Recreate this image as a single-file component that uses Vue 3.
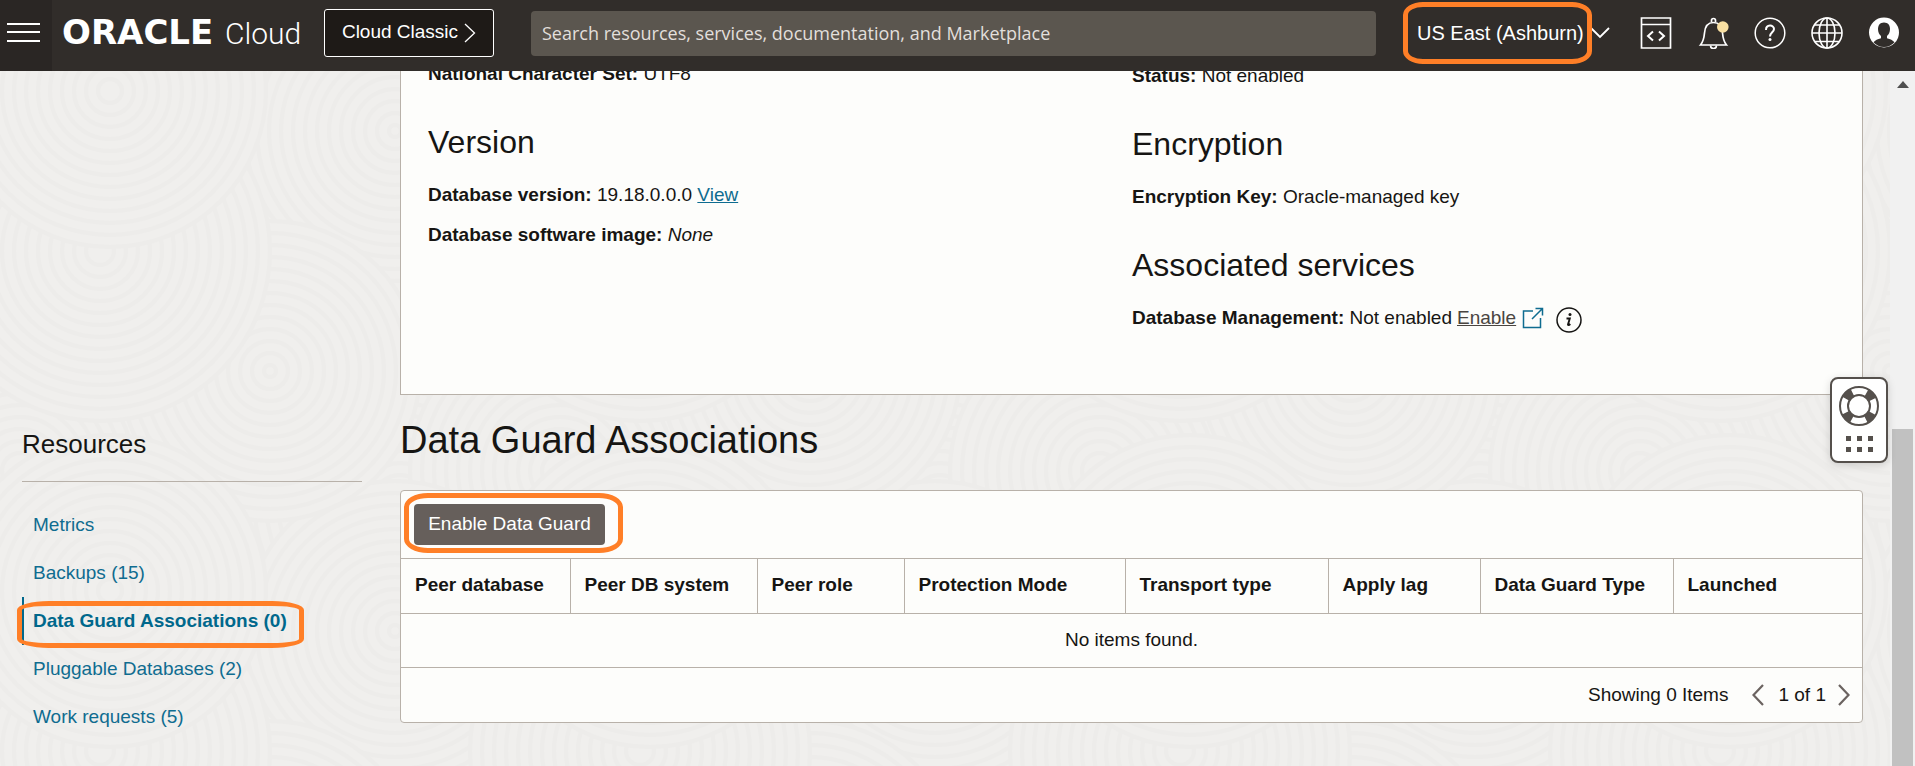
<script setup>
import { ref } from 'vue'

const query = ref('')
const region = ref('US East (Ashburn)')

const tile = { w: 540, h: 500 }
const discs = [
  { x: 400, y: 430, r: 170 },
  { x: 20, y: 400, r: 150 },
  { x: 395, y: 60, r: 150 },
  { x: 270, y: 300, r: 150 },
  { x: 100, y: 180, r: 170 },
  { x: 110, y: 20, r: 156 },
]
const rings = discs.flatMap((d) => {
  const radii = []
  for (let r = d.r; r > 4; r -= 12) radii.push(r)
  return [-1, 0, 1].flatMap((i) =>
    [-1, 0, 1].map((j) => ({ x: d.x + i * tile.w, y: d.y + j * tile.h, radii }))
  )
})

const resources = [
  { label: 'Metrics' },
  { label: 'Backups (15)' },
  { label: 'Data Guard Associations (0)', active: true },
  { label: 'Pluggable Databases (2)' },
  { label: 'Work requests (5)' },
]

const columns = [
  { label: 'Peer database', cls: 'c-database' },
  { label: 'Peer DB system', cls: 'c-system' },
  { label: 'Peer role', cls: 'c-role' },
  { label: 'Protection Mode', cls: 'c-mode' },
  { label: 'Transport type', cls: 'c-transport' },
  { label: 'Apply lag', cls: 'c-lag' },
  { label: 'Data Guard Type', cls: 'c-type' },
  { label: 'Launched', cls: 'c-launched' },
]
</script>

<template>
  <div class="page">
    <header class="topbar">
      <button class="menu" aria-label="Open navigation menu">
        <svg width="34" height="20" viewBox="0 0 34 20"><path d="M0 1h33M0 9h33M0 18h33" stroke="#fff" stroke-width="2" /></svg>
      </button>
      <a class="brand" href="#"><span class="brand-name">ORACLE</span><span class="brand-product">Cloud</span></a>
      <button class="classic">
        <span>Cloud Classic</span>
        <svg width="12" height="20" viewBox="0 0 12 20"><path d="M1 1l9.5 9L1 19" fill="none" stroke="#fff" stroke-width="1.3" /></svg>
      </button>
      <input v-model="query" class="search" type="text" aria-label="Search" placeholder="Search resources, services, documentation, and Marketplace" />
      <label class="region">
        <select v-model="region" aria-label="Region"><option>US East (Ashburn)</option></select>
        <svg width="20" height="12" viewBox="0 0 20 12"><path d="M1 1l9 9 9-9" fill="none" stroke="#fff" stroke-width="1.8" /></svg>
        <span class="mark mark-region"></span>
      </label>
      <div class="tools">
        <button aria-label="Developer tools">
          <svg width="32" height="32" viewBox="0 0 32 32" fill="none" stroke="#fff" stroke-width="1.7"><path d="M1.5 1h29v30h-29zM1.5 7.5h29" /><path d="M13 14.5l-5 4.5 5 4.5M19 14.5l5 4.5-5 4.5" stroke-width="2" /></svg>
        </button>
        <button aria-label="Announcements">
          <svg width="32" height="32" viewBox="0 0 32 32" fill="none" stroke="#fff" stroke-width="1.7"><path d="M3.500 28h26c-2.500-3-3.500-6.500-4-12-.5-6.500-3.500-10.500-9-10.500S8 9.500 7.500 16c-.5 5.500-1.500 9-4 12z" /><path d="M14.500 5V3.500a2 2 0 0 1 4 0V5M13.500 28.500a3 3 0 0 0 6 0" /><circle cx="25.800" cy="10" r="5.800" fill="#f9e0a2" stroke="none" /></svg>
        </button>
        <button aria-label="Help">
          <svg width="32" height="32" viewBox="0 0 32 32" fill="none" stroke="#fff" stroke-width="1.5"><circle cx="16" cy="16" r="14.8" /><path d="M12 13c0-6 8-5.500 8-1 0 3.200-4 3.500-4 7.500" stroke-width="2" /><circle cx="16" cy="22.500" r="1.500" fill="#fff" stroke="none" /></svg>
        </button>
        <button aria-label="Language">
          <svg width="32" height="32" viewBox="0 0 32 32" fill="none" stroke="#fff" stroke-width="1.6"><circle cx="16" cy="16" r="15" /><ellipse cx="16" cy="16" rx="8" ry="15" /><path d="M16 1v30M1 16h30M3.500 8h25M3.500 24.500h25" /></svg>
        </button>
        <button aria-label="Profile">
          <svg width="32" height="32" viewBox="0 0 32 32"><circle cx="16" cy="15.500" r="15" fill="#fff" /><path d="M16 5.500c4 0 6 2.800 6 6.500 0 3.200-1.300 5.600-3 7v2.200c3.400.8 5.800 2 7.500 4A14.500 14.500 0 0 1 16 30a14.500 14.500 0 0 1-10.500-4.800c1.700-2 4.100-3.200 7.500-4V19c-1.700-1.400-3-3.800-3-7 0-3.700 2-6.500 6-6.500z" fill="#312d2a" /></svg>
        </button>
      </div>
    </header>

    <div class="body">
      <main class="content">
        <svg class="texture" width="100%" height="100%" aria-hidden="true">
          <defs>
            <pattern id="waves" :width="tile.w" :height="tile.h" patternUnits="userSpaceOnUse">
              <rect :width="tile.w" :height="tile.h" fill="#f0efed" />
              <g v-for="(d, i) in rings" :key="i" stroke="#edecea" stroke-width="4" fill="#f0efed">
                <circle v-for="r in d.radii" :key="r" :cx="d.x" :cy="d.y" :r="r" />
              </g>
            </pattern>
          </defs>
          <rect width="100%" height="100%" fill="url(#waves)" />
        </svg>

        <section class="details">
          <div class="details-col">
            <p><b>National Character Set:</b> UTF8</p>
            <h2>Version</h2>
            <p><b>Database version:</b> 19.18.0.0.0 <a href="#">View</a></p>
            <p><b>Database software image:</b> <i>None</i></p>
          </div>
          <div class="details-col second">
            <p><b>Status:</b> Not enabled</p>
            <h2>Encryption</h2>
            <p><b>Encryption Key:</b> Oracle-managed key</p>
            <h2>Associated services</h2>
            <p class="management">
              <span><b>Database Management:</b> Not enabled</span>
              <a class="enable" href="#">Enable</a>
              <svg class="external" width="22" height="22" viewBox="0 0 22 22" fill="none" stroke="#0f6c90" stroke-width="1.5"><path d="M11 4H1.500v16.500h17V11M10 12L20.500 1.500M13.500 1.500h7v7" /></svg>
              <svg class="info" width="26" height="26" viewBox="0 0 26 26"><circle cx="13" cy="13" r="12" fill="none" stroke="#161513" stroke-width="1.5" /><circle cx="14" cy="7.500" r="1.500" fill="#161513" /><path d="M10.500 11.500h3.300l-1.800 6c-.2.900.8.900 2.300-.5" fill="none" stroke="#161513" stroke-width="1.900" /></svg>
            </p>
          </div>
        </section>

        <nav class="resources" aria-label="Resources">
          <h3>Resources</h3>
          <ul>
            <li v-for="item in resources" :key="item.label" :class="{ active: item.active }">
              <a href="#">{{ item.label }}</a>
              <span v-if="item.active" class="mark mark-resource"></span>
            </li>
          </ul>
        </nav>

        <section class="associations">
          <h1>Data Guard Associations</h1>
          <div class="card">
            <div class="toolbar">
              <button class="primary">Enable Data Guard</button>
              <span class="mark mark-enable"></span>
            </div>
            <table>
              <colgroup><col v-for="c in columns" :key="c.cls" :class="c.cls" /></colgroup>
              <thead>
                <tr><th v-for="c in columns" :key="c.label" scope="col">{{ c.label }}</th></tr>
              </thead>
              <tbody>
                <tr><td :colspan="columns.length">No items found.</td></tr>
              </tbody>
            </table>
            <div class="pager">
              <span>Showing 0 Items</span>
              <button class="prev" aria-label="Previous page"><svg width="12" height="22" viewBox="0 0 12 22"><path d="M11 1L1.500 11l9.500 10" fill="none" stroke="#6b6360" stroke-width="2.2" /></svg></button>
              <span>1 of 1</span>
              <button class="next" aria-label="Next page"><svg width="12" height="22" viewBox="0 0 12 22"><path d="M1 1l9.500 10L1 21" fill="none" stroke="#6b6360" stroke-width="2.2" /></svg></button>
            </div>
          </div>
        </section>
      </main>

      <div class="scrollbar" aria-hidden="true">
        <svg width="12" height="7" viewBox="0 0 12 7"><path d="M0 7l6-7 6 7z" fill="#505050" /></svg>
        <div class="thumb"></div>
      </div>

      <button class="support" aria-label="Support">
        <svg width="40" height="40" viewBox="0 0 40 40" fill="none" stroke="#55504c">
          <circle cx="20" cy="20" r="15" stroke-width="9" stroke-dasharray="9 14.560" stroke-dashoffset="-7.300" />
          <circle cx="20" cy="20" r="19" stroke-width="2" /><circle cx="20" cy="20" r="11" stroke-width="2" />
        </svg>
        <svg width="27" height="16" viewBox="0 0 27 16" fill="#55504c"><path d="M0 0h5v5H0zM11 0h5v5h-5zM22 0h5v5h-5zM0 11h5v5H0zM11 11h5v5h-5zM22 11h5v5h-5z" /></svg>
      </button>
    </div>
  </div>
</template>

<style>
body {
  margin: 0;
  overflow: hidden;
}
</style>

<style scoped>
.page {
  display: flex;
  flex-direction: column;
  height: 100vh;
  overflow: hidden;
  color: #161513;
  background: #f0efed;
  font: 19px/24px 'Liberation Sans', Arial, sans-serif;
}
.page * {
  box-sizing: border-box;
}
h1, h2, h3, p, ul {
  margin: 0;
  padding: 0;
  font-weight: 400;
}
button, select, input {
  margin: 0;
  padding: 0;
  border: 0;
  background: none;
  color: inherit;
  font: inherit;
}
svg {
  display: block;
  flex: none;
}
a {
  color: #0f6c90;
}

.topbar {
  position: relative;
  z-index: 2;
  display: flex;
  flex: none;
  align-items: center;
  height: 71px;
  padding: 0 15px 5px 0;
  color: #fff;
  background: #312d2a;
}
.menu {
  align-self: stretch;
  width: 52px;
  margin-bottom: -5px;
  padding: 0 0 6px 7px;
  background: #2a2624;
}
.brand {
  display: flex;
  align-items: baseline;
  width: 262px;
  margin-left: 10px;
  color: #fff;
  line-height: 36px;
  text-decoration: none;
}
.brand-name {
  width: 163px;
  font-family: 'DejaVu Sans', sans-serif;
  font-size: 34px;
  font-weight: 700;
}
.brand-product {
  font-family: Roboto, sans-serif;
  font-size: 30px;
  font-weight: 300;
}
.classic {
  display: flex;
  align-items: center;
  justify-content: center;
  gap: 6px;
  width: 170px;
  height: 48px;
  border: 1px solid #fff;
  border-radius: 3px;
  background: #1e1a17;
}
.classic span {
  padding-bottom: 2px;
}
.search {
  flex: 1;
  min-width: 0;
  height: 45px;
  margin: 0 41px 0 37px;
  padding: 0 11px;
  border-radius: 4px;
  color: #fff;
  background: #5b564f;
  font-family: 'Open Sans', 'Noto Sans', sans-serif;
  font-size: 18px;
}
.search::placeholder {
  color: #e2dfdb;
  opacity: 1;
}
.region {
  position: relative;
  display: flex;
  align-items: center;
  gap: 6px;
  margin-right: 30px;
}
.region select {
  appearance: none;
  font-size: 20px;
}
.tools {
  display: flex;
  gap: 25px;
}

.mark {
  position: absolute;
  border: 5px solid #ff7f27;
  pointer-events: none;
}
.mark-region {
  top: -19px;
  left: -14px;
  width: 189px;
  height: 62px;
  border-radius: 20px / 13px;
}
.mark-enable {
  top: 2px;
  left: 3px;
  width: 219px;
  height: 60px;
  border-radius: 24px / 14px;
}
.mark-resource {
  top: 4px;
  left: -5px;
  width: 287px;
  height: 47px;
  border-radius: 32px / 9px;
}

.body {
  position: relative;
  display: flex;
  flex: 1;
  min-height: 0;
}
.content {
  position: relative;
  display: grid;
  flex: 1;
  grid-template-rows: 324px 1fr;
  grid-template-columns: 340px minmax(0, 1fr);
  column-gap: 38px;
  min-width: 0;
  padding: 0 27px 0 22px;
  overflow: hidden;
}
.texture {
  position: absolute;
  inset: 0;
}
.details, .resources, .associations {
  position: relative;
}
.details {
  display: grid;
  grid-column: 2;
  grid-template-columns: 704fr 730fr;
  padding: 0 0 0 27px;
  border: 1px solid #b8b1a9;
  border-top: 0;
  background: #fdfdfb;
}
.details-col {
  margin-top: -9px;
}
.details-col.second {
  margin-top: -7px;
}
.details h2 {
  margin: 36px 0 21px;
  font-size: 32px;
  line-height: 40px;
}
.details p + p {
  margin-top: 16px;
}
.management {
  display: flex;
  align-items: center;
  height: 24px;
}
.enable {
  margin-left: 5px;
  color: #4a4541;
}
.external {
  margin: 0 12px 0 6px;
}
.info {
  margin-top: 4px;
}

.resources {
  grid-column: 1;
  padding-top: 33px;
}
.resources h3 {
  margin-bottom: 19px;
  padding-bottom: 21px;
  border-bottom: 1px solid #b8b1a9;
  font-size: 26px;
  line-height: 32px;
}
.resources ul {
  list-style: none;
}
.resources li {
  position: relative;
  display: flex;
  align-items: center;
  height: 48px;
  padding-left: 11px;
}
.resources li.active::before {
  position: absolute;
  inset: 0 auto 0 0;
  width: 2px;
  background: #00688c;
  content: '';
}
.resources a {
  text-decoration: none;
}
.resources .active a {
  color: #00688c;
  font-weight: 700;
}

.associations h1 {
  margin: 23px 0 28px;
  font-size: 38px;
  line-height: 44px;
}
.card {
  border: 1px solid #b8b1a9;
  border-radius: 4px;
  background: #fdfdfb;
}
.toolbar {
  position: relative;
  padding: 13px;
}
.primary {
  display: block;
  width: 191px;
  height: 41px;
  padding-bottom: 2px;
  border-radius: 4px;
  color: #fff;
  background: #665f5b;
}
table {
  width: 100%;
  border-collapse: collapse;
  table-layout: fixed;
}
.c-database { width: 169px; }
.c-system { width: 187px; }
.c-role { width: 147px; }
.c-mode { width: 221px; }
.c-transport { width: 203px; }
.c-lag { width: 152px; }
.c-type { width: 193px; }
.c-launched { width: 189px; }
th {
  height: 55px;
  padding: 0 14px 3px;
  border-top: 1px solid #b8b1a9;
  border-bottom: 1px solid #b8b1a9;
  font-weight: 700;
  text-align: left;
}
th + th {
  border-left: 1px solid #b8b1a9;
}
td {
  height: 54px;
  padding: 0 0 2px;
  border-bottom: 1px solid #b8b1a9;
  text-align: center;
}
.pager {
  display: flex;
  align-items: center;
  justify-content: flex-end;
  height: 54px;
  padding-right: 12px;
}
.prev {
  margin: 0 14px 0 24px;
}
.next {
  margin-left: 12px;
}

.scrollbar {
  position: relative;
  display: flex;
  flex: none;
  flex-direction: column;
  align-items: center;
  width: 25px;
  padding-top: 10px;
  background: #f1f1f1;
}
.thumb {
  flex: 1;
  width: 21px;
  margin-top: 341px;
  background: #c1c1c1;
}
.support {
  position: absolute;
  top: 306px;
  right: 27px;
  display: flex;
  flex-direction: column;
  align-items: center;
  justify-content: center;
  gap: 10px;
  width: 58px;
  height: 86px;
  padding-bottom: 3px;
  border: 2px solid #55504c;
  border-radius: 8px;
  background: #fff;
  box-shadow: 0 2px 8px rgba(0, 0, 0, 0.15);
}
</style>
